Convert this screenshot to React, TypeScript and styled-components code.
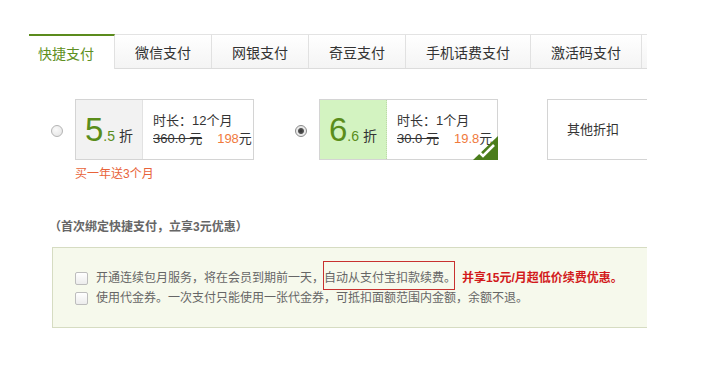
import React from 'react';
import styled, { createGlobalStyle } from 'styled-components';

const GlobalStyle = createGlobalStyle`
  html, body {
    margin: 0;
    padding: 0;
    background: #ffffff;
  }
  body {
    font-family: "Liberation Sans", "Noto Sans CJK SC", sans-serif;
    font-size: 12px;
    color: #333;
  }
`;

const Page = styled.div`
  width: 618px;
  padding: 34px 0 0 29px;
  overflow: hidden;
`;

const Tabs = styled.div`
  display: flex;
  height: 34px;
  border-bottom: 1px solid #dcdcdc;
  white-space: nowrap;
`;

const Tab = styled.div<{ $active?: boolean }>`
  flex: none;
  box-sizing: border-box;
  height: ${(p) => (p.$active ? '35px' : '34px')};
  padding: ${(p) => (p.$active ? '1px 20px 0 9px' : '1px 20px 0')};
  border-top: ${(p) => (p.$active ? '2px solid #5b8b1d' : '1px solid #e3e3e3')};
  border-right: 1px solid #e1e1e1;
  background: ${(p) => (p.$active ? '#ffffff' : 'linear-gradient(#ffffff, #f4f4f4)')};
  color: ${(p) => (p.$active ? '#5e8f22' : '#333')};
  font-size: 14px;
  line-height: ${(p) => (p.$active ? '34px' : '35px')};
  cursor: pointer;
`;

const TabStub = styled.div`
  flex: none;
  width: 40px;
  box-sizing: border-box;
  height: 34px;
  border-top: 1px solid #e3e3e3;
  background: linear-gradient(#ffffff, #f4f4f4);
`;

const Options = styled.div`
  display: flex;
  align-items: flex-start;
  margin-top: 30px;
  padding-left: 22px;
`;

const OptionGroup = styled.div<{ $gap: number }>`
  display: flex;
  flex-direction: column;
  margin-right: ${(p) => p.$gap}px;
`;

const OptionLine = styled.div`
  display: flex;
  align-items: center;
  gap: 12px;
`;

const Radio = styled.span<{ $checked?: boolean }>`
  box-sizing: border-box;
  width: 12px;
  height: 12px;
  border-radius: 50%;
  border: 1px solid ${(p) => (p.$checked ? '#8a8a8a' : '#b4b4b4')};
  background: ${(p) =>
    p.$checked
      ? 'radial-gradient(circle, #333 0, #555 2.5px, #e6e6e6 3.5px, #f4f4f4 100%)'
      : 'radial-gradient(circle at 40% 35%, #fafafa 0, #e2e2e2 100%)'};
  margin-top: 2px;
`;

const Card = styled.div`
  position: relative;
  display: flex;
  width: 179px;
  height: 61px;
  box-sizing: border-box;
  border: 1px solid #d4d4d4;
  background: #fff;
`;

const Discount = styled.div<{ $selected?: boolean }>`
  display: flex;
  align-items: baseline;
  justify-content: center;
  width: 67px;
  box-sizing: border-box;
  padding-top: 13px;
  background: ${(p) => (p.$selected ? '#d3f3c1' : '#f2f2f2')};
  border-right: 1px ${(p) => (p.$selected ? 'dotted #bcd8a8' : 'solid #e2e2e2')};
`;

const BigNum = styled.span`
  font-size: 33px;
  line-height: 1;
  color: #5a8d1a;
`;

const SmallNum = styled.span`
  font-size: 14px;
  color: #5a8d1a;
`;

const ZheLabel = styled.span`
  font-size: 14px;
  margin-left: 4px;
  color: #333;
`;

const Info = styled.div`
  display: flex;
  flex-direction: column;
  padding: 12px 0 0 10px;
  font-size: 13px;
  line-height: 18px;
  color: #333;
`;

const PriceRow = styled.div`
  display: flex;
  gap: 15px;
`;

const OldPrice = styled.s`
  color: #333;
`;

const NewPrice = styled.span`
  color: #333;
  em {
    font-style: normal;
    color: #f07a3c;
  }
`;

const CheckBadge = styled.svg`
  position: absolute;
  right: -1px;
  bottom: -1px;
`;

const OtherCard = styled.div`
  width: 120px;
  height: 61px;
  box-sizing: border-box;
  border: 1px solid #d4d4d4;
  padding-left: 19px;
  font-size: 13px;
  line-height: 59px;
  color: #333;
  flex: none;
`;

const Promo = styled.div`
  margin: 6px 0 0 24px;
  line-height: 16px;
  color: #e8633a;
`;

const Title = styled.div`
  margin: 37px 0 0 20px;
  line-height: 16px;
  font-weight: bold;
  color: #666;
`;

const Notice = styled.div`
  margin: 12px 0 0 23px;
  width: 620px;
  box-sizing: border-box;
  padding: 20px 0 19px 22px;
  background: #f6f9ec;
  border: 1px solid #d6dcc2;
  white-space: nowrap;
`;

const NoticeLine = styled.div`
  display: flex;
  align-items: center;
  line-height: 20px;
  color: #666;
`;

const Checkbox = styled.span`
  flex: none;
  box-sizing: border-box;
  width: 13px;
  height: 13px;
  margin-right: 8px;
  border: 1px solid #bdbdbd;
  border-radius: 2px;
  background: linear-gradient(#ffffff, #ececec);
`;

const Marked = styled.span`
  position: relative;
  &::after {
    content: '';
    position: absolute;
    top: -7px;
    bottom: -2px;
    left: -1px;
    right: 1px;
    border: 1px solid #c8312f;
    pointer-events: none;
  }
`;

const Highlight = styled.b`
  margin-left: 6px;
  color: #d2191b;
`;

type Plan = {
  whole: string;
  fraction: string;
  term: string;
  oldPrice: string;
  newPrice: string;
  selected?: boolean;
};

const plans: Plan[] = [
  { whole: '5', fraction: '.5', term: '时长：12个月', oldPrice: '360.0 元', newPrice: '198' },
  { whole: '6', fraction: '.6', term: '时长：1个月', oldPrice: '30.0 元', newPrice: '19.8', selected: true },
];

const tabs = ['快捷支付', '微信支付', '网银支付', '奇豆支付', '手机话费支付', '激活码支付'];

function PlanCard({ plan }: { plan: Plan }) {
  return (
    <Card>
      <Discount $selected={plan.selected}>
        <BigNum>{plan.whole}</BigNum>
        <SmallNum>{plan.fraction}</SmallNum>
        <ZheLabel>折</ZheLabel>
      </Discount>
      <Info>
        <span>{plan.term}</span>
        <PriceRow>
          <OldPrice>{plan.oldPrice}</OldPrice>
          <NewPrice>
            <em>{plan.newPrice}</em>元
          </NewPrice>
        </PriceRow>
      </Info>
      {plan.selected && (
        <CheckBadge width="25" height="24" viewBox="0 0 25 24">
          <polygon points="25,0 25,24 0,24" fill="#4b7d1c" />
          <polyline points="5,15 10,20 21,9" fill="none" stroke="#fff" strokeWidth="2.6" />
        </CheckBadge>
      )}
    </Card>
  );
}

export default function App() {
  return (
    <>
      <GlobalStyle />
      <Page>
        <Tabs>
          {tabs.map((t, i) => (
            <Tab key={t} $active={i === 0}>
              {t}
            </Tab>
          ))}
          <TabStub />
        </Tabs>

        <Options>
          <OptionGroup $gap={41}>
            <OptionLine>
              <Radio />
              <PlanCard plan={plans[0]} />
            </OptionLine>
            <Promo>买一年送3个月</Promo>
          </OptionGroup>
          <OptionGroup $gap={49}>
            <OptionLine>
              <Radio $checked />
              <PlanCard plan={plans[1]} />
            </OptionLine>
          </OptionGroup>
          <OtherCard>其他折扣</OtherCard>
        </Options>

        <Title>（首次绑定快捷支付，立享3元优惠）</Title>

        <Notice>
          <NoticeLine>
            <Checkbox />
            开通连续包月服务，将在会员到期前一天，
            <Marked>自动从支付宝扣款续费。</Marked>
            <Highlight>并享15元/月超低价续费优惠。</Highlight>
          </NoticeLine>
          <NoticeLine>
            <Checkbox />
            使用代金券。一次支付只能使用一张代金券，可抵扣面额范围内金额，余额不退。
          </NoticeLine>
        </Notice>
      </Page>
    </>
  );
}
